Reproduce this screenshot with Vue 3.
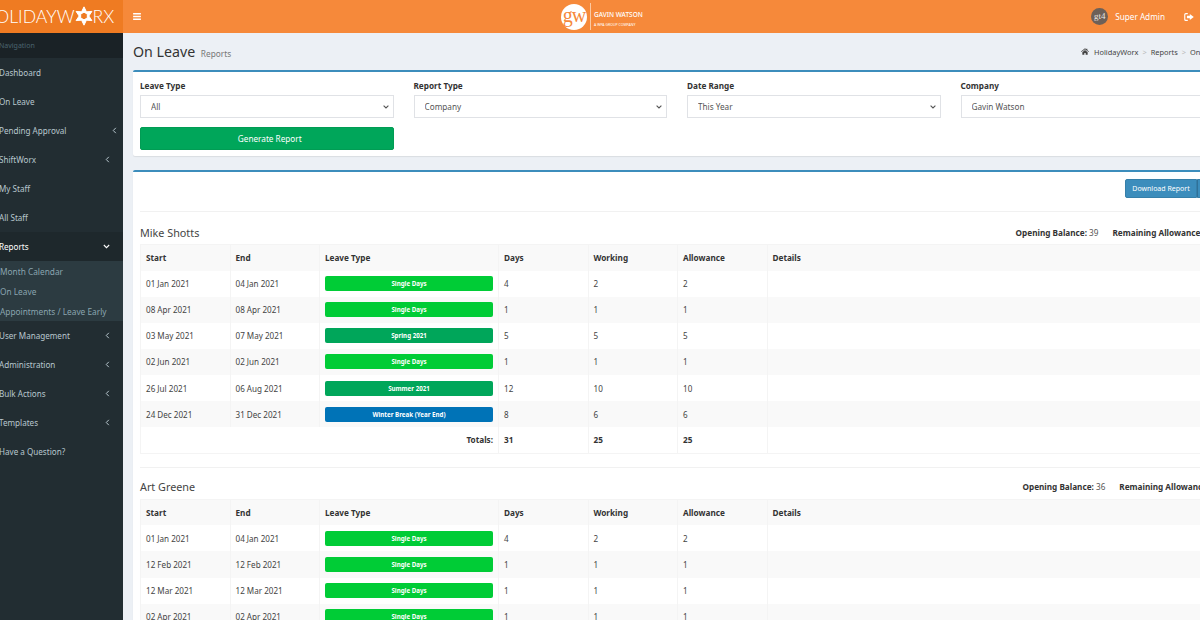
<script setup>
const nav = [
  { label: 'Dashboard' },
  { label: 'On Leave' },
  { label: 'Pending Approval', arrow: true, far: true },
  { label: 'ShiftWorx', arrow: true },
  { label: 'My Staff' },
  { label: 'All Staff' },
  { label: 'Reports', open: true, children: ['Month Calendar', 'On Leave', 'Appointments / Leave Early'] },
  { label: 'User Management', arrow: true },
  { label: 'Administration', arrow: true },
  { label: 'Bulk Actions', arrow: true },
  { label: 'Templates', arrow: true },
  { label: 'Have a Question?' }
]

const filters = [
  { label: 'Leave Type', value: 'All' },
  { label: 'Report Type', value: 'Company' },
  { label: 'Date Range', value: 'This Year' },
  { label: 'Company', value: 'Gavin Watson' }
]

const columns = ['Start', 'End', 'Leave Type', 'Days', 'Working', 'Allowance', 'Details']

const people = [
  {
    name: 'Mike Shotts',
    opening: 39,
    remaining: 14.5,
    rows: [
      ['01 Jan 2021', '04 Jan 2021', 'Single Days', 'single', 4, 2, 2],
      ['08 Apr 2021', '08 Apr 2021', 'Single Days', 'single', 1, 1, 1],
      ['03 May 2021', '07 May 2021', 'Spring 2021', 'season', 5, 5, 5],
      ['02 Jun 2021', '02 Jun 2021', 'Single Days', 'single', 1, 1, 1],
      ['26 Jul 2021', '06 Aug 2021', 'Summer 2021', 'season', 12, 10, 10],
      ['24 Dec 2021', '31 Dec 2021', 'Winter Break (Year End)', 'winter', 8, 6, 6]
    ],
    totals: [31, 25, 25]
  },
  {
    name: 'Art Greene',
    opening: 36,
    remaining: 14,
    rows: [
      ['01 Jan 2021', '04 Jan 2021', 'Single Days', 'single', 4, 2, 2],
      ['12 Feb 2021', '12 Feb 2021', 'Single Days', 'single', 1, 1, 1],
      ['12 Mar 2021', '12 Mar 2021', 'Single Days', 'single', 1, 1, 1],
      ['02 Apr 2021', '02 Apr 2021', 'Single Days', 'single', 1, 1, 1]
    ]
  }
]
</script>

<template>
  <div class="page">
    <header class="topbar">
      <div class="logo">
        <span class="logo-text">HOLIDAYW</span>
        <svg class="logo-gear" viewBox="0 0 24 24">
          <path fill="#fff" stroke="#fff" stroke-width="1.200" fill-rule="evenodd" d="M12 1l2.900 6 6.600-.5L17.800 12l3.700 5.500-6.600-.5L12 23l-2.900-6-6.600.5L6.200 12 2.500 6.500l6.600.5zM12 7.400 8 9.700v4.600l4 2.300 4-2.300V9.700z"/>
        </svg>
        <span class="logo-text">RX</span>
      </div>
      <div class="navbar">
        <svg class="bars" viewBox="0 0 10 9"><path fill="#fff" d="M0 0h10v1.800H0zM0 3.600h10v1.800H0zM0 7.200h10V9H0z"/></svg>
        <div class="brand">
          <span class="brand-mark">gw</span>
          <span class="brand-line"></span>
          <div class="brand-text">
            <span class="brand-name">GAVIN WATSON</span>
            <span class="brand-sub">A WPA GROUP COMPANY</span>
          </div>
        </div>
        <div class="user">
          <span class="avatar">gt4</span>
          <span class="user-name">Super Admin</span>
          <svg class="signout" viewBox="0 0 12 10">
            <path fill="#fff" d="M4.500 0v1.500H2a.6.6 0 0 0-.6.6v5.800c0 .3.3.6.6.6h2.500V10H2A2 2 0 0 1 0 8V2a2 2 0 0 1 2-2zM7 1.200 12 5 7 8.800V6.600H3.400V3.400H7z"/>
          </svg>
        </div>
      </div>
    </header>

    <div class="body">
      <aside class="sidebar">
        <div class="nav-header">Navigation</div>
        <ul class="menu">
          <li v-for="item in nav" :key="item.label">
            <div class="menu-item" :class="{ active: item.open, far: item.far }">
              <span>{{ item.label }}</span>
              <svg v-if="item.arrow" class="chev" viewBox="0 0 6 8"><path d="M4.600.8 1.500 4l3.100 3.200" fill="none" stroke="currentColor" stroke-width="1.200"/></svg>
              <svg v-if="item.open" class="chev down" viewBox="0 0 8 6"><path d="M.8 1.200 4 4.400l3.200-3.200" fill="none" stroke="currentColor" stroke-width="1.300"/></svg>
            </div>
            <ul v-if="item.children" class="submenu">
              <li v-for="child in item.children" :key="child">{{ child }}</li>
            </ul>
          </li>
        </ul>
      </aside>

      <main class="content">
        <div class="content-header">
          <h1>On Leave <small>Reports</small></h1>
          <div class="crumbs">
            <svg class="home" viewBox="0 0 12 10"><path fill="#444" d="M6 0l2 1.700V.8h1.500v2.200L12 5.100l-.7.800L6 1.500.7 5.900 0 5.100zM2 6l4-3.200L10 6v4H7V7.200H5V10H2z"/></svg>
            <span>HolidayWorx</span>
            <i>&gt;</i>
            <span>Reports</span>
            <i>&gt;</i>
            <span>On Leave</span>
          </div>
        </div>

        <section class="box filter-box">
          <div class="filters">
            <div v-for="f in filters" :key="f.label" class="field">
              <label>{{ f.label }}</label>
              <select><option>{{ f.value }}</option></select>
            </div>
          </div>
          <button class="generate">Generate Report</button>
        </section>

        <section class="box report-box">
          <div class="actions">
            <button class="download">Download Report</button>
            <button class="download extra"></button>
          </div>
          <div v-for="p in people" :key="p.name" class="person">
            <div class="person-head">
              <h3>{{ p.name }}</h3>
              <div class="balances">
                <span><b>Opening Balance:</b> {{ p.opening }}</span>
                <span><b>Remaining Allowance:</b> {{ p.remaining }}</span>
              </div>
            </div>
            <table>
              <colgroup>
                <col class="c-date"><col class="c-date"><col class="c-type"><col class="c-date"><col class="c-date"><col class="c-date"><col>
              </colgroup>
              <thead>
                <tr><th v-for="c in columns" :key="c">{{ c }}</th></tr>
              </thead>
              <tbody>
                <tr v-for="(r, i) in p.rows" :key="i">
                  <td>{{ r[0] }}</td>
                  <td>{{ r[1] }}</td>
                  <td><span class="pill" :class="r[3]">{{ r[2] }}</span></td>
                  <td>{{ r[4] }}</td>
                  <td>{{ r[5] }}</td>
                  <td>{{ r[6] }}</td>
                  <td></td>
                </tr>
              </tbody>
              <tfoot v-if="p.totals">
                <tr>
                  <th colspan="3" class="totals">Totals:</th>
                  <th>{{ p.totals[0] }}</th>
                  <th>{{ p.totals[1] }}</th>
                  <th>{{ p.totals[2] }}</th>
                  <th></th>
                </tr>
              </tfoot>
            </table>
          </div>
        </section>
      </main>
    </div>
  </div>
</template>

<style scoped>
.page {
  width: 1200px;
  height: 620px;
  overflow: hidden;
  font-family: "Noto Sans", "Open Sans", sans-serif;
  font-size: 8.2px;
  color: #333;
  background: #ecf0f5;
}

.topbar {
  display: flex;
  height: 33px;
}
.logo {
  width: 123px;
  flex: none;
  background: #ef7b22;
  display: flex;
  align-items: center;
  overflow: hidden;
  color: #fff;
}
.logo-text {
  font-family: "Lato", sans-serif;
  font-weight: 300;
  font-size: 17.600px;
  flex: none;
}
.logo-text:first-child {
  margin-left: -18px;
}
.logo-gear {
  width: 20px;
  height: 20px;
  flex: none;
  margin: -1px -1px 0 -1px;
}
.navbar {
  flex: 1;
  min-width: 0;
  background: #f6893a;
  display: flex;
  align-items: center;
  padding-left: 10px;
}
.bars {
  width: 8px;
  height: 7px;
}
.brand {
  display: flex;
  align-items: center;
  margin-left: 420px;
}
.brand-mark {
  width: 26px;
  height: 26px;
  border-radius: 50%;
  background: #fff;
  color: #f6893a;
  font-family: "Liberation Serif", serif;
  font-size: 20px;
  letter-spacing: -1px;
  line-height: 22px;
  text-align: center;
}
.brand-line {
  width: 1px;
  height: 27px;
  background: #fbc9a2;
  margin: 0 3px;
}
.brand-text {
  display: flex;
  flex-direction: column;
  color: #fff;
  gap: 5px;
  padding-top: 5px;
}
.brand-name {
  font-size: 6.500px;
  line-height: 7px;
  font-weight: 500;
}
.brand-sub {
  font-size: 3.500px;
  line-height: 4px;
}
.user {
  margin-left: auto;
  display: flex;
  align-items: center;
  color: #fff;
  padding-right: 6px;
}
.avatar {
  width: 17px;
  height: 17px;
  border-radius: 50%;
  background: #6d6058;
  font-family: "Liberation Serif", serif;
  font-size: 9px;
  line-height: 17px;
  text-align: center;
  color: #e8e4e0;
}
.user-name {
  margin-left: 7px;
  margin-right: 19px;
}
.signout {
  width: 10px;
  height: 8px;
}

.body {
  display: flex;
  height: 587px;
}
.sidebar {
  width: 123px;
  flex: none;
  background: #222d32;
  overflow: hidden;
}
.nav-header {
  height: 25px;
  line-height: 25px;
  background: #1a2226;
  color: #4b646f;
  font-size: 7px;
  text-indent: -1px;
}
.menu,
.submenu {
  list-style: none;
  margin: 0;
  padding: 0;
}
.menu-item {
  height: 29px;
  display: flex;
  align-items: center;
  justify-content: space-between;
  padding-right: 13px;
  color: #b8c7ce;
  font-size: 8.100px;
  text-indent: -1px;
}
.menu-item.far {
  padding-right: 6px;
}
.menu-item.active {
  background: #1e282c;
  color: #fff;
}
.chev {
  width: 5px;
  height: 7px;
  flex: none;
}
.chev.down {
  width: 7px;
  height: 5px;
}
.submenu {
  background: #2c3b41;
  color: #8aa4af;
  font-size: 8.300px;
}
.submenu li {
  height: 20px;
  line-height: 21px;
}

.content {
  flex: none;
  width: 1119px;
  padding-left: 10px;
  box-sizing: border-box;
}
.content-header {
  display: flex;
  justify-content: space-between;
  align-items: center;
  height: 37px;
  white-space: nowrap;
}
h1 {
  margin: 0;
  font-size: 14.200px;
  font-weight: 400;
  color: #333;
}
h1 small {
  font-size: 8.300px;
  font-weight: 400;
  color: #777;
  margin-left: 2px;
}
.crumbs {
  display: flex;
  align-items: center;
  gap: 4px;
  font-size: 7.400px;
  color: #444;
  width: 161px;
  flex: none;
}
.crumbs i {
  font-style: normal;
  color: #bbb;
}
.home {
  width: 8px;
  height: 7px;
  flex: none;
  margin-right: 1px;
}

.box {
  background: #fff;
  border-top: 2px solid #3c8dbc;
  border-radius: 2px;
  padding: 0 7px;
  box-shadow: 0 1px 1px rgba(0, 0, 0, 0.08);
}
.filter-box {
  height: 86px;
  box-sizing: border-box;
  padding-top: 8px;
  margin-bottom: 14px;
}
.filters {
  display: grid;
  grid-template-columns: repeat(4, 253.500px);
  gap: 20px;
}
.field {
  display: flex;
  flex-direction: column;
}
.field label {
  font-weight: 700;
  line-height: 12px;
  margin-bottom: 3px;
  color: #333;
}
.field select {
  appearance: none;
  height: 23px;
  border: 1px solid #e0e2e6;
  background: #fff url("data:image/svg+xml,%3Csvg xmlns='http://www.w3.org/2000/svg' width='6' height='4'%3E%3Cpath d='M.6.6 3 3 5.400.6' fill='none' stroke='%23555' stroke-width='1.100'/%3E%3C/svg%3E") no-repeat right 4px center;
  color: #555;
  font: inherit;
  padding: 0 6px 0 10px;
  border-radius: 0;
}
.generate {
  display: block;
  width: 253.500px;
  height: 23px;
  margin-top: 9px;
  padding: 0 0 1px 6px;
  background: #00a65a;
  border: 1px solid #019c54;
  border-radius: 2px;
  color: #fff;
  font: inherit;
}

.report-box {
  height: 600px;
}
.actions {
  display: flex;
  justify-content: flex-end;
  padding-top: 7px;
  height: 40px;
  box-sizing: border-box;
  border-bottom: 1px solid #f1f1f1;
}
.download {
  height: 19px;
  background: #3c8dbc;
  border: 1px solid #367fa9;
  border-radius: 2px 0 0 2px;
  color: #fff;
  font: inherit;
  font-size: 7px;
  width: 72px;
  padding: 0;
}
.download.extra {
  width: 38px;
  border-left-color: #2f7199;
  border-radius: 0 2px 2px 0;
}
.person-head {
  display: flex;
  align-items: center;
  justify-content: space-between;
  height: 32px;
  padding: 13px 0 4px;
  box-sizing: border-box;
  white-space: nowrap;
}
.person + .person .person-head {
  height: 31px;
  padding-top: 11px;
}
h3 {
  margin: 0;
  font-size: 10.800px;
  font-weight: 400;
  color: #444;
}
.balances {
  display: flex;
  gap: 14px;
  color: #555;
  padding-right: 14px;
}
.balances b {
  color: #333;
}
table {
  width: 100%;
  border-collapse: collapse;
  table-layout: fixed;
  border: 1px solid #f4f4f4;
}
.c-date {
  width: 89.500px;
}
.c-type {
  width: 179px;
}
th,
td {
  height: 26.100px;
  box-sizing: border-box;
  padding: 0 5px;
  text-align: left;
  border-left: 1px solid #f4f4f4;
  vertical-align: middle;
}
th {
  font-weight: 700;
  color: #333;
}
td {
  color: #444;
  font-size: 8.100px;
}
thead tr,
tbody tr:nth-child(even) {
  background: #f9f9f9;
}
.totals {
  text-align: right;
}
.pill {
  display: block;
  height: 15px;
  line-height: 15px;
  border-radius: 2px;
  text-align: center;
  color: #fff;
  font-size: 6.200px;
  font-weight: 700;
}
.single {
  background: #00cc36;
}
.season {
  background: #00a65a;
}
.winter {
  background: #0073b7;
}
.person + .person {
  margin-top: 13px;
  border-top: 1px solid #f1f1f1;
}
</style>

<style>
html,
body {
  margin: 0;
  background: #ecf0f5;
}
</style>
